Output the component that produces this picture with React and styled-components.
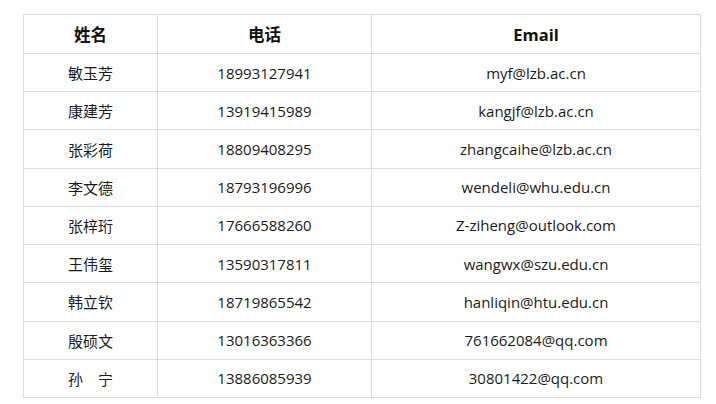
import React from "react";
import styled, { createGlobalStyle } from "styled-components";

const GlobalStyle = createGlobalStyle`
  html, body {
    margin: 0;
    padding: 0;
    background: #fff;
  }
  body {
    font-family: "Open Sans", "Noto Sans CJK SC", sans-serif;
    color: #222;
  }
`;

const Page = styled.div`
  padding: 14px 16px 0 23px;
`;

const Table = styled.table`
  width: 677px;
  border-collapse: collapse;
  table-layout: fixed;
  border: 1px solid #dddddd;
`;

const Col = styled.col`
  width: ${(p) => p.$w}px;
`;

const HeadCell = styled.th`
  height: 38px;
  padding: 0;
  border: 1px solid #dddddd;
  font-size: 16.5px;
  font-weight: 700;
  text-align: center;
  vertical-align: middle;
  color: #111;
`;

const Cell = styled.td`
  height: 37.22px;
  padding: 0;
  border: 1px solid #dddddd;
  font-size: 15px;
  text-align: center;
  vertical-align: middle;
  color: #1a1a1a;
`;

const people = [
  ["敏玉芳", "18993127941", "myf@lzb.ac.cn"],
  ["康建芳", "13919415989", "kangjf@lzb.ac.cn"],
  ["张彩荷", "18809408295", "zhangcaihe@lzb.ac.cn"],
  ["李文德", "18793196996", "wendeli@whu.edu.cn"],
  ["张梓珩", "17666588260", "Z-ziheng@outlook.com"],
  ["王伟玺", "13590317811", "wangwx@szu.edu.cn"],
  ["韩立钦", "18719865542", "hanliqin@htu.edu.cn"],
  ["殷硕文", "13016363366", "761662084@qq.com"],
  ["孙　宁", "13886085939", "30801422@qq.com"],
];

export default function App() {
  return (
    <Page>
      <GlobalStyle />
      <Table>
        <colgroup>
          <Col $w={134} />
          <Col $w={214} />
          <Col $w={329} />
        </colgroup>
        <thead>
          <tr>
            <HeadCell>姓名</HeadCell>
            <HeadCell>电话</HeadCell>
            <HeadCell>Email</HeadCell>
          </tr>
        </thead>
        <tbody>
          {people.map(([name, phone, email]) => (
            <tr key={phone}>
              <Cell>{name}</Cell>
              <Cell>{phone}</Cell>
              <Cell>{email}</Cell>
            </tr>
          ))}
        </tbody>
      </Table>
    </Page>
  );
}
